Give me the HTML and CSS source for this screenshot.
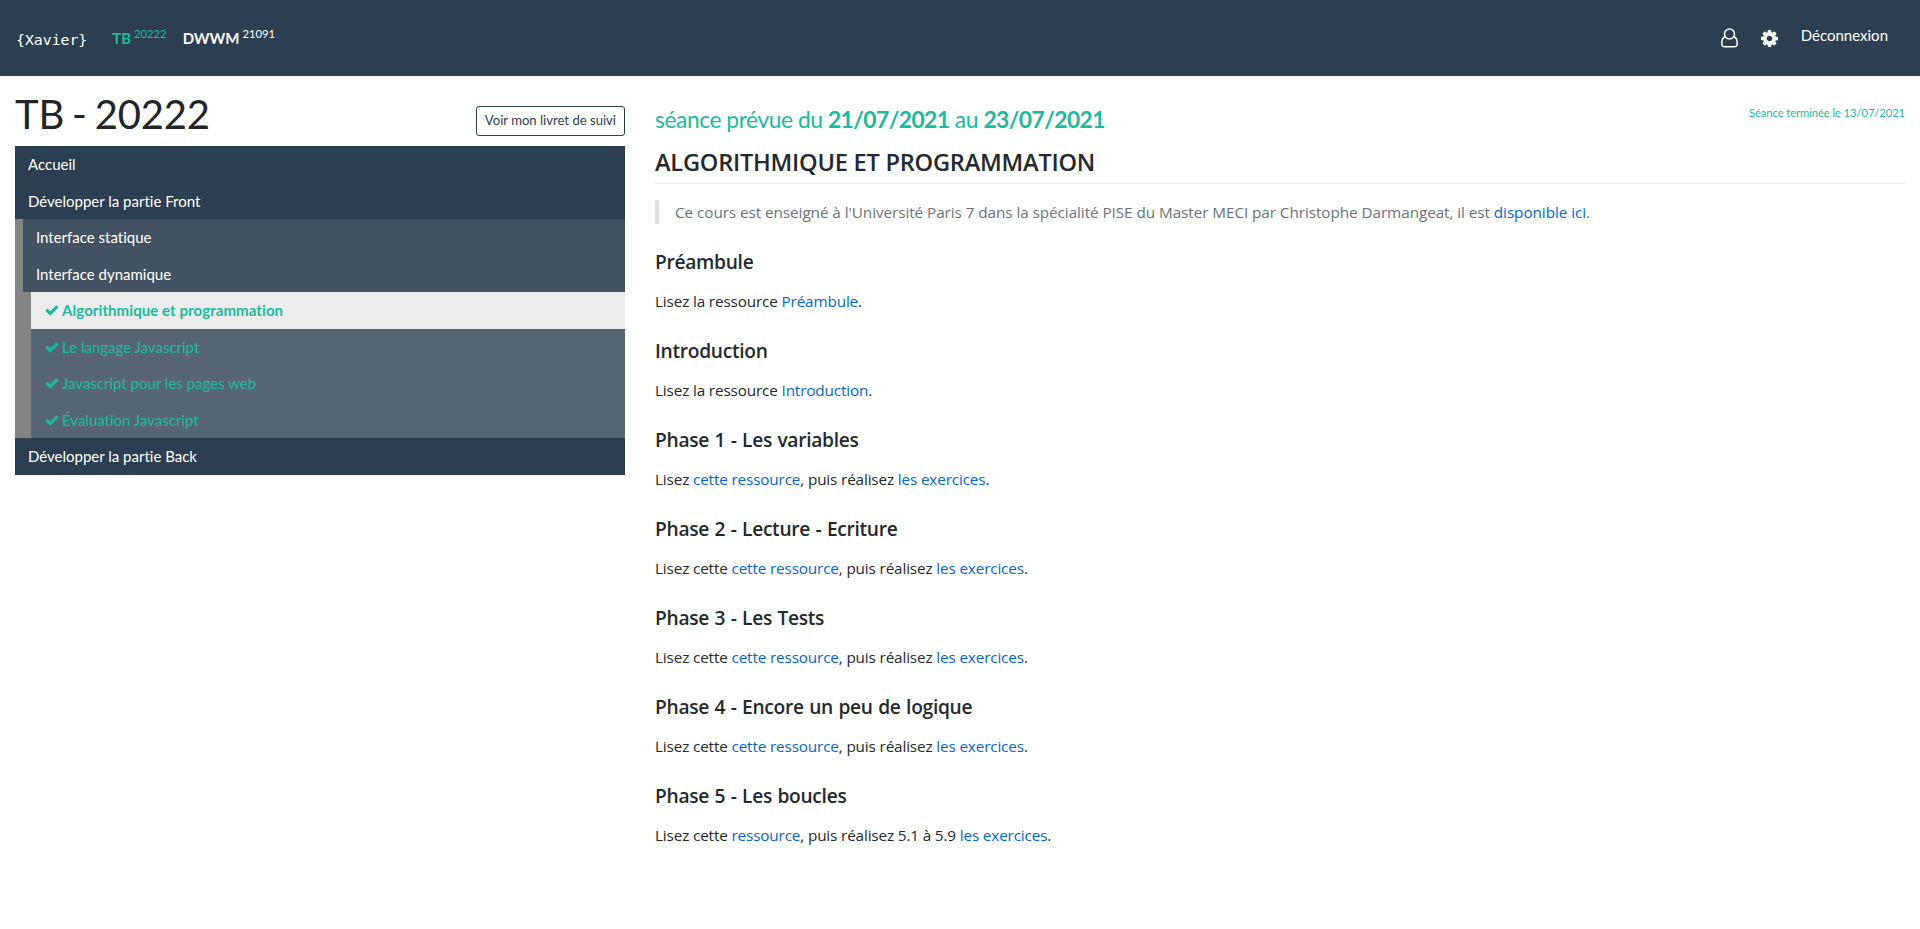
FILE: index.html
```html
<!DOCTYPE html>
<html lang="fr">
<head>
<meta charset="utf-8">
<title>TB - 20222</title>
<link rel="stylesheet" href="styles.css">
</head>
<body>
<header class="topbar">
  <a class="brand">{Xavier}</a>
  <nav class="groups">
    <a class="group active"><b>TB</b> <sup>20222</sup></a>
    <a class="group"><b>DWWM</b> <sup>21091</sup></a>
  </nav>
  <div class="tools">
    <svg class="icon-user" viewBox="0 0 17 20"><g fill="none" stroke="#fff" stroke-width="1.5"><circle cx="8.5" cy="6" r="5"/><path d="M4.3 8.800C1.800 9.500.8 12 .8 15.200c0 2.300 1.300 3.600 3 3.600h9.400c1.700 0 3-1.300 3-3.600 0-3.200-1-5.700-3.500-6.400"/></g></svg>
    <svg class="icon-gear" viewBox="0 0 1536 1536"><path fill="#fff" d="M1024 768q0-106-75-181t-181-75-181 75-75 181 75 181 181 75 181-75 75-181zm512-109v222q0 12-8 23t-20 13l-185 28q-19 54-39 91 35 50 107 138 10 12 10 25t-9 23q-27 37-99 108t-94 71q-12 0-26-9l-138-108q-44 23-91 38-16 136-29 186-7 28-36 28H657q-14 0-24.500-8.500T621 1506l-28-184q-49-16-90-37l-141 107q-10 9-25 9-14 0-25-11-126-114-165-168-7-10-7-23 0-12 8-23 15-21 51-66.500t54-70.500q-27-50-41-99L29 913q-13-2-21-12.500T0 877V655q0-12 8-23t19-13l186-28q14-46 39-92-40-57-107-138-10-12-10-24 0-10 9-23 26-36 98.500-107.500T337 135q13 0 26 10l138 107q44-23 91-38 16-136 29-186 7-28 36-28h222q14 0 24.500 8.500T915 30l28 184q49 16 90 37l142-107q9-9 24-9 13 0 25 10 129 119 165 170 7 8 7 22 0 12-8 23-15 21-51 66.500t-54 70.500q26 50 41 98l183 28q13 2 21 12.500t8 23.500z"/></svg>
    <a class="logout">Déconnexion</a>
  </div>
</header>
<div class="page">
  <aside class="side">
    <div class="side-head">
      <h1>TB - 20222</h1>
      <a class="btn">Voir mon livret de suivi</a>
    </div>
    <nav class="menu">
      <a class="item">Accueil</a>
      <a class="item">Développer la partie Front</a>
      <div class="sub level1">
        <a class="item">Interface statique</a>
        <a class="item">Interface dynamique</a>
        <div class="sub level2">
          <a class="item done current"><svg class="check" viewBox="0 0 14 11"><path d="M.3 5.800 2.500 3.600 5.200 6.200 11.300.2 13.600 2.400 5.200 10.800z"/></svg>Algorithmique et programmation</a>
          <a class="item done"><svg class="check" viewBox="0 0 14 11"><path d="M.3 5.800 2.500 3.600 5.200 6.200 11.300.2 13.600 2.400 5.200 10.800z"/></svg>Le langage Javascript</a>
          <a class="item done"><svg class="check" viewBox="0 0 14 11"><path d="M.3 5.800 2.500 3.600 5.200 6.200 11.300.2 13.600 2.400 5.200 10.800z"/></svg>Javascript pour les pages web</a>
          <a class="item done"><svg class="check" viewBox="0 0 14 11"><path d="M.3 5.800 2.500 3.600 5.200 6.200 11.300.2 13.600 2.400 5.200 10.800z"/></svg>Évaluation Javascript</a>
        </div>
      </div>
      <a class="item">Développer la partie Back</a>
    </nav>
  </aside>
  <main class="content">
    <div class="session">
      <h3 class="planned">séance prévue du <b>21/07/2021</b> au <b>23/07/2021</b></h3>
      <small class="ended">Séance terminée le 13/07/2021</small>
    </div>
    <article class="markdown">
      <h2>ALGORITHMIQUE ET PROGRAMMATION</h2>
      <blockquote>Ce cours est enseigné à l'Université Paris 7 dans la spécialité PISE du Master MECI par Christophe Darmangeat, il est <a>disponible ici</a>.</blockquote>
      <h3>Préambule</h3>
      <p>Lisez la ressource <a>Préambule</a>.</p>
      <h3>Introduction</h3>
      <p>Lisez la ressource <a>Introduction</a>.</p>
      <h3>Phase 1 - Les variables</h3>
      <p>Lisez <a>cette ressource</a>, puis réalisez <a>les exercices</a>.</p>
      <h3>Phase 2 - Lecture - Ecriture</h3>
      <p>Lisez cette <a>cette ressource</a>, puis réalisez <a>les exercices</a>.</p>
      <h3>Phase 3 - Les Tests</h3>
      <p>Lisez cette <a>cette ressource</a>, puis réalisez <a>les exercices</a>.</p>
      <h3>Phase 4 - Encore un peu de logique</h3>
      <p>Lisez cette <a>cette ressource</a>, puis réalisez <a>les exercices</a>.</p>
      <h3>Phase 5 - Les boucles</h3>
      <p>Lisez cette <a>ressource</a>, puis réalisez 5.1 à 5.9 <a>les exercices</a>.</p>
    </article>
  </main>
</div>
</body>
</html>
```
FILE: styles.css
```css
* { box-sizing: border-box; }
body { margin: 0; background: #fff; color: #212529; font: 400 15px/1.5 Lato, sans-serif; font-variant-ligatures: none; }
h1, h2, h3, p, blockquote { margin: 0; }
.topbar { display: flex; align-items: flex-start; height: 76px; padding: 0 32px 0 16px; background: #2c3e50; color: #fff; }
.brand { padding-top: 28px; font: 14.8px/24px "DejaVu Sans Mono", monospace; }
.groups { display: flex; gap: 16px; padding: 26px 0 0 25px; }
.group { line-height: 24px; white-space: nowrap; word-spacing: -1px; }
.group.active { color: #18bc9c; }
sup { position: relative; top: -.5em; font-size: 11.25px; line-height: 0; vertical-align: baseline; }
.tools { display: flex; align-items: flex-start; margin-left: auto; }
.icon-user { width: 17px; height: 20px; margin: 28px 23px 0 0; }
.icon-gear { width: 17px; height: 17px; margin: 30px 23px 0 0; }
.logout { padding-top: 24px; }
.page { display: flex; gap: 30px; padding: 0 15px; }
.side { width: 610px; flex: none; }
.side-head { display: flex; justify-content: space-between; align-items: flex-start; height: 70px; }
h1 { padding-top: 14px; font-size: 40px; line-height: 48px; font-weight: 400; letter-spacing: -.2px; word-spacing: -2px; }
.btn { height: 30px; margin-top: 30px; padding: 0 8px; border: 1px solid #2c3e50; border-radius: 3px; color: #2c3e50; font-size: 13.1px; line-height: 27px; }
.menu { background: #2c3e50; color: #fff; }
.item { display: block; height: 36.5px; padding: 7px 13px; line-height: 22.5px; }
.sub { border-left: 8px solid #848484; }
.level1 { background: #445160; }
.level2 { background: #576573; }
.done { color: #18bc9c; padding-left: 14px; }
.current { background: #ececec; font-weight: 700; letter-spacing: .08px; }
.check { width: 14px; height: 11px; margin-right: 3px; fill: #18bc9c; }
.content { flex: 1; min-width: 0; }
.session { display: flex; justify-content: space-between; height: 71px; }
.planned { padding-top: 29px; color: #18bc9c; font-size: 22.8px; line-height: 29px; font-weight: 400; letter-spacing: -.45px; }
.planned b { letter-spacing: -.55px; }
.ended { padding-top: 28px; color: #18bc9c; font-size: 11.25px; line-height: 18px; letter-spacing: -.1px; }
.markdown { font: 15.3px/24px "Open Sans", sans-serif; letter-spacing: -.15px; color: #24292e; }
.markdown a { color: #0366d6; }
.markdown h2 { height: 37px; border-bottom: 1px solid #eaecef; font-size: 23.6px; line-height: 30px; font-weight: 600; letter-spacing: -.23px; }
.markdown blockquote { margin: 16px 0 24px; padding: 0 16px; border-left: 4px solid #dfe2e5; color: #6a737d; letter-spacing: -.07px; }
.markdown h3 { margin: 24px 0 16px; padding-top: 2px; font-size: 19.2px; line-height: 23px; font-weight: 600; letter-spacing: -.3px; word-spacing: .8px; }
```
